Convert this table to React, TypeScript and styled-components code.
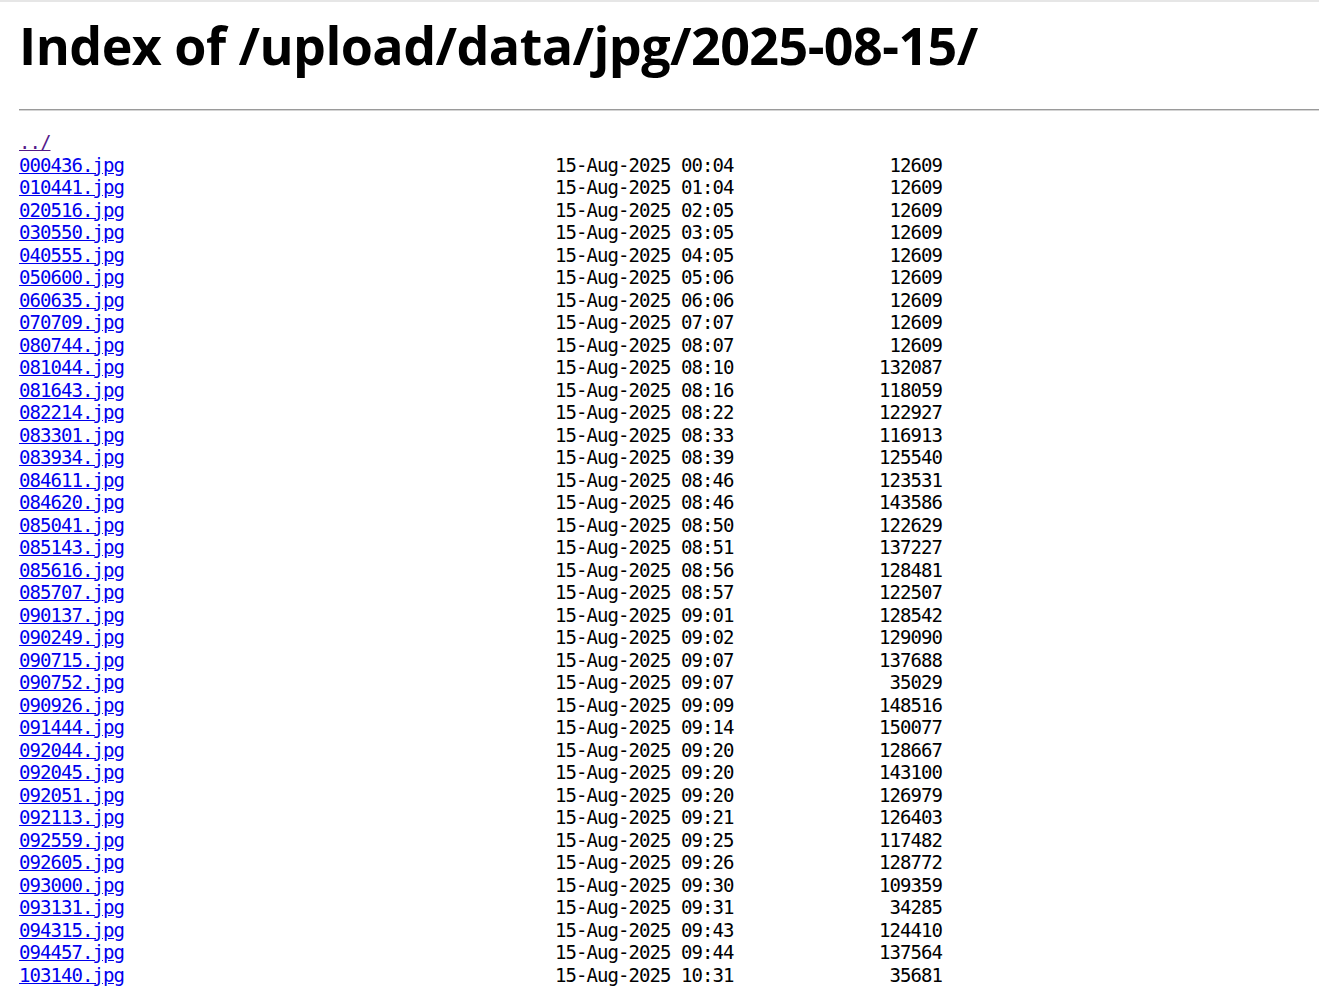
import styled, { createGlobalStyle } from "styled-components";

const GlobalStyle = createGlobalStyle`
  html, body {
    margin: 0;
    padding: 0;
    background: #ffffff;
  }
  body {
    border-top: 2px solid #e6e6e6;
    padding-left: 19px;
    font-family: "Liberation Serif", serif;
  }
`;

const Title = styled.h1`
  font-family: "Open Sans", "Noto Sans", sans-serif;
  font-weight: 700;
  font-size: 52px;
  letter-spacing: -0.55px;
  line-height: 60px;
  color: #000;
  margin: 13px 0 0 0;
  white-space: nowrap;
`;

const Rule = styled.hr`
  border: none;
  border-top: 1px solid #9a9a9a;
  border-bottom: 1px solid #d4d4d4;
  height: 0;
  margin: 34px 0 20px 0;
`;

const Listing = styled.div`
  font-family: "DejaVu Sans Mono", "Liberation Mono", monospace;
  font-size: 19px;
  letter-spacing: -0.94px;
  line-height: 22.5px;
  color: #000;
`;

const Row = styled.div`
  display: grid;
  grid-template-columns: 536px 178px 209px;
  white-space: pre;
`;

const FileLink = styled.a<{ $visited?: boolean }>`
  color: ${({ $visited }) => ($visited ? "#551a8b" : "#0000ee")};
  text-decoration: underline;
`;

const Stamp = styled.span``;

const Size = styled.span`
  text-align: right;
`;

const files: [string, string, string][] = [
  ["000436", "00:04", "12609"],
  ["010441", "01:04", "12609"],
  ["020516", "02:05", "12609"],
  ["030550", "03:05", "12609"],
  ["040555", "04:05", "12609"],
  ["050600", "05:06", "12609"],
  ["060635", "06:06", "12609"],
  ["070709", "07:07", "12609"],
  ["080744", "08:07", "12609"],
  ["081044", "08:10", "132087"],
  ["081643", "08:16", "118059"],
  ["082214", "08:22", "122927"],
  ["083301", "08:33", "116913"],
  ["083934", "08:39", "125540"],
  ["084611", "08:46", "123531"],
  ["084620", "08:46", "143586"],
  ["085041", "08:50", "122629"],
  ["085143", "08:51", "137227"],
  ["085616", "08:56", "128481"],
  ["085707", "08:57", "122507"],
  ["090137", "09:01", "128542"],
  ["090249", "09:02", "129090"],
  ["090715", "09:07", "137688"],
  ["090752", "09:07", "35029"],
  ["090926", "09:09", "148516"],
  ["091444", "09:14", "150077"],
  ["092044", "09:20", "128667"],
  ["092045", "09:20", "143100"],
  ["092051", "09:20", "126979"],
  ["092113", "09:21", "126403"],
  ["092559", "09:25", "117482"],
  ["092605", "09:26", "128772"],
  ["093000", "09:30", "109359"],
  ["093131", "09:31", "34285"],
  ["094315", "09:43", "124410"],
  ["094457", "09:44", "137564"],
  ["103140", "10:31", "35681"],
];

export default function App() {
  return (
    <>
      <GlobalStyle />
      <Title>Index of /upload/data/jpg/2025-08-15/</Title>
      <Rule />
      <Listing>
        <Row>
          <span>
            <FileLink href="../" $visited>
              ../
            </FileLink>
          </span>
        </Row>
        {files.map(([name, time, size]) => (
          <Row key={name}>
            <span>
              <FileLink href={`${name}.jpg`}>{name}.jpg</FileLink>
            </span>
            <Stamp>15-Aug-2025 {time}</Stamp>
            <Size>{size}</Size>
          </Row>
        ))}
      </Listing>
    </>
  );
}
